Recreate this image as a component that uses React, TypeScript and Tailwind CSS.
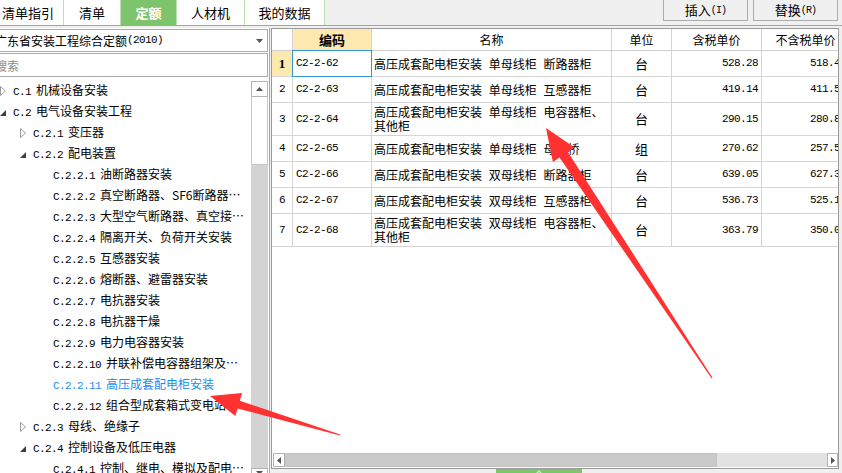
import React from 'react';

/**
 * 定额 browser: category tree on the left, quota table on the right.
 */

const mono = "font-['Liberation_Mono',monospace] text-[11px] tracking-[-0.6px]";

type TreeNode = {
  level: 0 | 1 | 2;
  code: string;
  name: string;
  toggle?: 'open' | 'closed';
  active?: boolean;
};

const tree: TreeNode[] = [
  { level: 0, code: 'C.1', name: '机械设备安装', toggle: 'closed' },
  { level: 0, code: 'C.2', name: '电气设备安装工程', toggle: 'open' },
  { level: 1, code: 'C.2.1', name: '变压器', toggle: 'closed' },
  { level: 1, code: 'C.2.2', name: '配电装置', toggle: 'open' },
  { level: 2, code: 'C.2.2.1', name: '油断路器安装' },
  { level: 2, code: 'C.2.2.2', name: '真空断路器、SF6断路器…' },
  { level: 2, code: 'C.2.2.3', name: '大型空气断路器、真空接…' },
  { level: 2, code: 'C.2.2.4', name: '隔离开关、负荷开关安装' },
  { level: 2, code: 'C.2.2.5', name: '互感器安装' },
  { level: 2, code: 'C.2.2.6', name: '熔断器、避雷器安装' },
  { level: 2, code: 'C.2.2.7', name: '电抗器安装' },
  { level: 2, code: 'C.2.2.8', name: '电抗器干燥' },
  { level: 2, code: 'C.2.2.9', name: '电力电容器安装' },
  { level: 2, code: 'C.2.2.10', name: '并联补偿电容器组架及…' },
  { level: 2, code: 'C.2.2.11', name: '高压成套配电柜安装', active: true },
  { level: 2, code: 'C.2.2.12', name: '组合型成套箱式变电站' },
  { level: 1, code: 'C.2.3', name: '母线、绝缘子', toggle: 'closed' },
  { level: 1, code: 'C.2.4', name: '控制设备及低压电器', toggle: 'open' },
  { level: 2, code: 'C.2.4.1', name: '控制、继电、模拟及配电…' },
];

const levelPad = ['pl-[10px]', 'pl-[30px]', 'pl-[50px]'];

type Row = {
  no: number;
  code: string;
  name: string[];
  unit: string;
  price: string;
  priceNoTax: string;
  tall?: boolean;
};

const rows: Row[] = [
  { no: 1, code: 'C2-2-62', name: ['高压成套配电柜安装 单母线柜 断路器柜'], unit: '台', price: '528.28', priceNoTax: '518.46' },
  { no: 2, code: 'C2-2-63', name: ['高压成套配电柜安装 单母线柜 互感器柜'], unit: '台', price: '419.14', priceNoTax: '411.59' },
  { no: 3, code: 'C2-2-64', name: ['高压成套配电柜安装 单母线柜 电容器柜、', '其他柜'], unit: '台', price: '290.15', priceNoTax: '280.86', tall: true },
  { no: 4, code: 'C2-2-65', name: ['高压成套配电柜安装 单母线柜 母线桥'], unit: '组', price: '270.62', priceNoTax: '257.52' },
  { no: 5, code: 'C2-2-66', name: ['高压成套配电柜安装 双母线柜 断路器柜'], unit: '台', price: '639.05', priceNoTax: '627.36' },
  { no: 6, code: 'C2-2-67', name: ['高压成套配电柜安装 双母线柜 互感器柜'], unit: '台', price: '536.73', priceNoTax: '525.16' },
  { no: 7, code: 'C2-2-68', name: ['高压成套配电柜安装 双母线柜 电容器柜、', '其他柜'], unit: '台', price: '363.79', priceNoTax: '350.07', tall: true },
];

const tabs = [
  { label: '清单指引', cls: 'w-[64px] justify-start pl-[2px]' },
  { label: '清单', cls: 'w-[57px] justify-center' },
  { label: '定额', cls: 'w-[56px] justify-center', active: true },
  { label: '人材机', cls: 'w-[68px] justify-center' },
  { label: '我的数据', cls: 'w-[80px] justify-center' },
];

export default function App() {
  return (
    <div className="relative w-[842px] h-[473px] overflow-hidden bg-[#f0f0f0] text-[12px] text-black font-['Noto_Sans_CJK_SC','Noto_Sans',sans-serif]">
      {/* Top tabs + actions */}
      <div className="flex h-[26px] border-b border-[#7cc46b]">
        {tabs.map((t) => (
          <div
            key={t.label}
            className={`flex items-center text-[13px] border-r border-[#b9e0ae] ${t.cls} ${
              t.active ? 'bg-[#7dc46c] text-white font-bold' : 'bg-white'
            }`}
          >
            {t.label}
          </div>
        ))}
        <div className="flex-1" />
        <div className="flex gap-[5px] pr-[4px] mt-[-1px]">
          <ActionButton label="插入" hotkey="(I)" />
          <ActionButton label="替换" hotkey="(R)" />
        </div>
      </div>

      {/* Main */}
      <div className="flex h-[447px] pt-[2px]">
        {/* Left panel */}
        <div className="w-[279px] ml-[-10px] pr-[1px] flex flex-col bg-white shrink-0">
          <div className="mt-[1px] h-[23px] flex items-center border border-[#a9a9a9] bg-white pl-[4px] pr-[4px] text-[12px] whitespace-nowrap">
            <span>广东省安装工程综合定额</span>
            <span className={mono}>(2010)</span>
            <span className="flex-1" />
            <svg width="7" height="4" viewBox="0 0 7 4">
              <polygon points="0,0 7,0 3.5,4" fill="#555" />
            </svg>
          </div>
          <input
            placeholder="搜索"
            className="mt-[1px] h-[24px] border border-[#a9a9a9] pl-[4px] text-[12px] outline-none placeholder:text-[#8c8c8c]"
          />
          <div className="flex flex-1 min-h-0">
            <div className="flex-1 pt-[3px] overflow-hidden">
              {tree.map((n) => (
                <div key={n.code} className={`flex items-center h-[21px] whitespace-nowrap ${levelPad[n.level]}`}>
                  <span className="w-[13px] shrink-0 flex items-center">
                    {n.toggle === 'closed' && (
                      <svg width="6" height="10" viewBox="0 0 6 10">
                        <polygon points="0.5,0.5 5.5,5 0.5,9.5" fill="white" stroke="#9c9c9c" />
                      </svg>
                    )}
                    {n.toggle === 'open' && (
                      <svg width="6" height="6" viewBox="0 0 6 6" className="mt-[3px]">
                        <polygon points="6,0 6,6 0,6" fill="#3f3f3f" />
                      </svg>
                    )}
                  </span>
                  <span className={n.active ? 'text-[#1a8cf5]' : ''}>
                    <span className={mono}>{n.code}</span>
                    <span className="ml-[5px]">{n.name}</span>
                  </span>
                </div>
              ))}
            </div>
            {/* vertical scrollbar */}
            <div className="w-[17px] shrink-0 flex flex-col pt-[4px]">
              <div className="h-[16px] shrink-0 border border-[#b4b4b4] bg-white flex items-center justify-center">
                <svg width="7" height="4" viewBox="0 0 7 4">
                  <polygon points="0,4 7,4 3.5,0" fill="#555" />
                </svg>
              </div>
              <div className="h-[68px] shrink-0 border-x border-b border-[#c8c8c8] bg-white" />
              <div className="h-[303px] shrink-0 bg-[#d3d3d3]" />
              <div className="h-[16px] shrink-0 border border-[#b4b4b4] bg-white flex items-start justify-center pt-[2px]">
                <svg width="7" height="4" viewBox="0 0 7 4">
                  <polygon points="0,0 7,0 3.5,4" fill="#555" />
                </svg>
              </div>
            </div>
          </div>
        </div>

        {/* splitter */}
        <div className="w-px bg-[#a8a8a8] shrink-0" />
        <div className="w-px shrink-0" />

        {/* Right panel */}
        <div className="w-[568px] shrink-0 flex flex-col">
          <div className="h-[441px] shrink-0 border border-[#9a9a9a] bg-white flex flex-col overflow-hidden">
            <div className="flex-1 overflow-hidden">
              {/* header */}
              <div className="flex h-[22px] border-b border-[#cfcfcf] w-[578px]">
                <div className="w-[21px] shrink-0 border-r border-[#d4d4d4]" />
                <div className="w-[79px] shrink-0 border-r border-[#d4d4d4] bg-[#fde9b0] flex items-center justify-center text-[13px] font-bold">
                  编码
                </div>
                <HeaderCell w="w-[240px]">名称</HeaderCell>
                <HeaderCell w="w-[60px]">单位</HeaderCell>
                <HeaderCell w="w-[90px]">含税单价</HeaderCell>
                <HeaderCell w="w-[88px]">不含税单价</HeaderCell>
              </div>
              {rows.map((r) => (
                <div
                  key={r.no}
                  className={`flex w-[578px] border-b border-[#d4d4d4] ${r.tall ? 'h-[33px]' : 'h-[26px]'}`}
                >
                  <div
                    className={`w-[21px] shrink-0 border-r border-[#d4d4d4] flex items-center justify-center ${
                      r.no === 1 ? "bg-[#fde9b0] font-bold text-[13px] font-['Liberation_Serif',serif]" : mono
                    }`}
                  >
                    {r.no}
                  </div>
                  <div className="relative w-[79px] shrink-0 border-r border-[#d4d4d4] flex items-center pl-[3px]">
                    <span className={mono}>{r.code}</span>
                    {r.no === 1 && (
                      <div className="absolute left-[-1px] top-[-1px] right-[-1px] bottom-[-1px] border-[1.5px] border-[#3496d6]" />
                    )}
                  </div>
                  <div className="w-[240px] shrink-0 border-r border-[#d4d4d4] flex flex-col justify-center pl-[2px] leading-[14px] whitespace-nowrap [word-spacing:4px]">
                    {r.name.map((line) => (
                      <div key={line}>{line}</div>
                    ))}
                  </div>
                  <div className="w-[60px] shrink-0 border-r border-[#d4d4d4] flex items-center justify-center text-[13px]">
                    {r.unit}
                  </div>
                  <div className="w-[90px] shrink-0 border-r border-[#d4d4d4] flex items-center justify-end pr-[3px]">
                    <span className={mono}>{r.price}</span>
                  </div>
                  <div className="w-[88px] shrink-0 border-r border-[#d4d4d4] flex items-center justify-end pr-[3px]">
                    <span className={mono}>{r.priceNoTax}</span>
                  </div>
                </div>
              ))}
            </div>
            {/* horizontal scrollbar */}
            <div className="flex h-[14px] shrink-0 pl-px mb-px">
              <div className="w-[12px] border border-[#b4b4b4] bg-white flex items-center justify-center">
                <svg width="4" height="7" viewBox="0 0 4 7">
                  <polygon points="4,0 4,7 0,3.5" fill="#555" />
                </svg>
              </div>
              <div className="w-[432px] bg-[#cacaca] border border-[#c2c2c2]" />
              <div className="flex-1 bg-[#e2e2e2]" />
              <div className="w-[11px] border border-[#b4b4b4] bg-white flex items-center justify-center">
                <svg width="4" height="7" viewBox="0 0 4 7">
                  <polygon points="0,0 0,7 4,3.5" fill="#555" />
                </svg>
              </div>
            </div>
          </div>
          {/* bottom splitter handle */}
          <div className="flex pl-[225px]">
            <div className="w-[86px] h-[10px] bg-[#7dc46c] flex justify-center pt-[1px]">
              <svg width="8" height="4" viewBox="0 0 8 4">
                <polyline points="1,4 4,1 7,4" fill="none" stroke="#d9f0d2" strokeWidth="1.2" />
              </svg>
            </div>
          </div>
        </div>
      </div>

      {/* Red annotation arrows */}
      <svg className="absolute inset-0 pointer-events-none" width="842" height="473" viewBox="0 0 842 473">
        <polygon
          points="546,128 574.5,147.5 567.9,151.9 712.5,377.7 711.5,378.3 559.5,157.5 552.9,161.9"
          fill="#ff3131"
        />
        <polygon
          points="210,396 242.1,393.1 239.8,400.8 340.1,434.5 339.9,435.5 237.6,408.4 235.3,416.1"
          fill="#ff3131"
        />
      </svg>
    </div>
  );
}

function HeaderCell({ w, children }: { w: string; children: React.ReactNode }) {
  return (
    <div className={`${w} shrink-0 border-r border-[#d4d4d4] flex items-center justify-center`}>
      {children}
    </div>
  );
}

function ActionButton({ label, hotkey }: { label: string; hotkey: string }) {
  return (
    <div className="w-[85px] h-[22px] border border-[#acacac] bg-[#f0f0f0] flex items-center justify-center text-[13px]">
      <span>{label}</span>
      <span className="font-['Liberation_Mono',monospace] text-[10px] tracking-[-0.8px]">{hotkey}</span>
    </div>
  );
}
